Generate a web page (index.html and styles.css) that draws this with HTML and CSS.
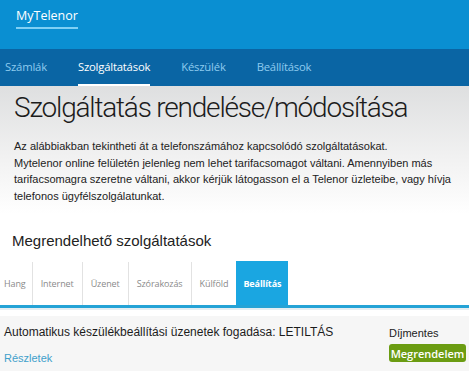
FILE: index.html
```html
<!DOCTYPE html>
<html lang="hu">
<head>
    <meta charset="UTF-8">
    <meta name="viewport" content="width=device-width, initial-scale=1.0">
    <title>MyTelenor - Szolgáltatások</title>
    <link rel="stylesheet" href="styles.css">
</head>
<body>
    <header class="topbar">
        <a class="brand" href="#">MyTelenor</a>
    </header>
    <nav class="mainnav">
        <a href="#">Számlák</a>
        <a href="#" class="active">Szolgáltatások</a>
        <a href="#">Készülék</a>
        <a href="#">Beállítások</a>
    </nav>

    <section class="intro">
        <h1>Szolgáltatás rendelése/módosítása</h1>
        <p>Az alábbiakban tekintheti át a telefonszámához kapcsolódó szolgáltatásokat.<br>
        Mytelenor online felületén jelenleg nem lehet tarifacsomagot váltani. Amennyiben más tarifacsomagra szeretne váltani, akkor kérjük látogasson el a Telenor üzleteibe, vagy hívja telefonos ügyfélszolgálatunkat.</p>
    </section>

    <h2 class="section-title">Megrendelhető szolgáltatások</h2>

    <div class="tabs">
        <a href="#" class="tab first">Hang</a>
        <a href="#" class="tab">Internet</a>
        <a href="#" class="tab">Üzenet</a>
        <a href="#" class="tab">Szórakozás</a>
        <a href="#" class="tab last">Külföld</a>
        <a href="#" class="tab active">Beállítás</a>
    </div>

    <div class="service">
        <div class="service-info">
            <div class="service-name">Automatikus készülékbeállítási üzenetek fogadása: LETILTÁS</div>
            <a href="#" class="details">Részletek</a>
        </div>
        <div class="service-order">
            <div class="price">Díjmentes</div>
            <button class="order">Megrendelem</button>
        </div>
    </div>
</body>
</html>
```

FILE: styles.css
```css
body {
    margin: 0;
    font-family: "Liberation Sans", Arial, sans-serif;
    background: #fff;
    color: #222;
    overflow: hidden;
}
a {
    text-decoration: none;
}
.topbar {
    height: 49px;
    background: #0a8fd2;
    box-sizing: border-box;
    padding: 6px 0 0 16px;
}
.brand {
    display: inline-block;
    font-family: "Open Sans", sans-serif;
    font-size: 12.5px;
    color: #fff;
    padding-bottom: 3px;
    border-bottom: 2px solid #7fd0f5;
}
.mainnav {
    height: 37px;
    background: #0a65a4;
    display: flex;
    gap: 31px;
    padding-left: 5px;
    box-sizing: border-box;
}
.mainnav a {
    font-family: "Open Sans", sans-serif;
    font-size: 11.3px;
    letter-spacing: -0.2px;
    color: #8ecbef;
    line-height: 35px;
    border-bottom: 2px solid transparent;
}
.mainnav a.active {
    color: #fff;
    border-bottom-color: #fff;
}
.intro {
    background: linear-gradient(180deg, #dedfe0 0%, #f1f1f1 55%, #fff 100%);
    padding: 1px 14px 10px;
}
.intro h1 {
    margin: 3px 0 0;
    font-family: Roboto, sans-serif;
    font-weight: 300;
    font-size: 28px;
    letter-spacing: -1.2px;
    line-height: 36px;
    white-space: nowrap;
    color: #1c1c1c;
}
.intro p {
    margin: 12px 0 0;
    font-size: 11px;
    line-height: 16.5px;
    color: #222;
    width: 446px;
}
.section-title {
    margin: 18px 0 0 12px;
    font-weight: normal;
    font-size: 15px;
    line-height: 18px;
    color: #222;
}
.tabs {
    display: flex;
    margin-top: 11px;
    height: 44px;
    border-bottom: 3px solid #25a3d6;
    box-shadow: 0 2px 0 #e6eef2;
}
.tab {
    font-family: "Open Sans", sans-serif;
    font-size: 9px;
    letter-spacing: -0.1px;
    color: #8a8a8a;
    padding: 0 8px;
    display: flex;
    align-items: center;
    border-right: 1px solid #e2e2e2;
    margin-top: 1px;
}
.tab.first {
    padding-left: 4px;
    padding-right: 6px;
}
.tab.last {
    border-right: none;
}
.tab.active {
    background: #1aa6e1;
    color: #fff;
    font-weight: bold;
    width: 52px;
    padding: 0;
    justify-content: center;
    border-right: none;
    margin-top: 0;
}
.service {
    display: flex;
    justify-content: space-between;
    background: #f6f6f6;
    margin-top: 8px;
    padding: 8px 3px 0 4px;
    height: 55px;
    box-sizing: border-box;
}
.service-name {
    font-size: 12px;
    line-height: 16px;
    color: #1c1c1c;
}
.details {
    display: block;
    width: fit-content;
    margin-top: 11px;
    font-size: 11px;
    line-height: 14px;
    color: #3fa0cb;
}
.service-order {
    width: 77px;
}
.price {
    font-size: 11px;
    line-height: 14px;
    margin-top: 2px;
    color: #222;
}
.order {
    display: block;
    margin-top: 4px;
    width: 77px;
    height: 18px;
    padding: 0;
    border: none;
    border-radius: 3px;
    background: #6b9c12;
    color: #fff;
    font-family: "Open Sans", sans-serif;
    font-weight: 600;
    font-size: 11px;
    cursor: pointer;
}
```
